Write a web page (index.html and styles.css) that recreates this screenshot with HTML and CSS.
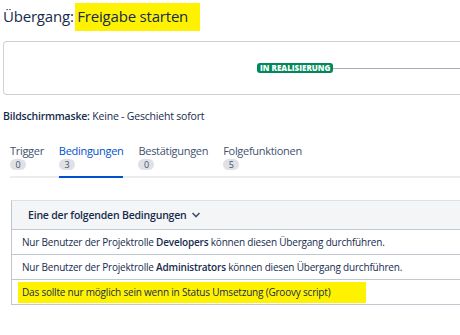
FILE: index.html
```html
<!DOCTYPE html>
<html lang="de">

<head>
  <meta charset="UTF-8">
  <title>Übergang: Freigabe starten</title>
  <link rel="stylesheet" href="styles.css">
</head>

<body>

  <h1 class="title">Übergang: <span class="marker">Freigabe starten</span></h1>

  <div class="diagram">
    <span class="lozenge">IN REALISIERUNG</span>
    <span class="connector"></span>
  </div>

  <p class="screen"><b>Bildschirmmaske:</b> Keine - Geschieht sofort</p>

  <ul class="tabs">
    <li class="tab">Trigger<span class="count">0</span></li>
    <li class="tab active">Bedingungen<span class="count">3</span></li>
    <li class="tab">Bestätigungen<span class="count">0</span></li>
    <li class="tab">Folgefunktionen<span class="count">5</span></li>
  </ul>

  <div class="conditions">
    <div class="cond-head">Eine der folgenden Bedingungen
      <svg class="chevron" width="10" height="8" viewBox="0 0 10 8">
        <path d="M1.5 2 L5 5.5 L8.5 2" fill="none" stroke="#42526e" stroke-width="1.6" />
      </svg>
    </div>
    <div class="cond-row">Nur Benutzer der Projektrolle <b>Developers</b> können diesen Übergang durchführen.</div>
    <div class="cond-row">Nur Benutzer der Projektrolle <b>Administrators</b> können diesen Übergang durchführen.</div>
    <div class="cond-row"><span class="marker small">Das sollte nur möglich sein wenn in Status Umsetzung (Groovy script)</span></div>
  </div>

</body>

</html>
```

FILE: styles.css
```css
html {
  overflow: hidden;
}

body {
  font-family: "Open Sans", "Noto Sans", sans-serif;
  background-color: #ffffff;
  margin: 0;
  padding: 0 0 0 3px;
  color: #172b4d;
}

.title {
  font-size: 15px;
  font-weight: normal;
  margin: 0;
  padding-top: 6px;
  height: 35px;
  letter-spacing: -0.2px;
}

.marker {
  background-color: #fff200;
  padding: 3px 12px 5px 2px;
  margin-left: -2px;
}

.marker.small {
  padding: 3px 36px 4px 4px;
  margin-left: -4px;
}

.diagram {
  height: 52px;
  border: 1px solid #d0d0d0;
  border-right: none;
  border-radius: 4px 0 0 4px;
  display: flex;
  align-items: center;
  padding-left: 253px;
}

.lozenge {
  background-color: #00875a;
  color: #ffffff;
  font-size: 8px;
  font-weight: 800;
  border-radius: 3px;
  padding: 0 3px;
  line-height: 10px;
}

.connector {
  flex: 1;
  height: 1px;
  background-color: #a5adba;
}

.screen {
  font-size: 10.5px;
  margin: 14px 0 0 0;
  letter-spacing: -0.2px;
}

.screen b {
  font-weight: 600;
}

.tabs {
  list-style: none;
  margin: 20px 0 0 7px;
  padding: 0;
  display: flex;
  gap: 15px;
  border-bottom: 2px solid #ebecf0;
}

.tab {
  font-size: 11px;
  color: #42526e;
  display: flex;
  flex-direction: column;
  align-items: flex-start;
  padding-bottom: 6px;
  margin-bottom: -2px;
  letter-spacing: -0.3px;
}

.tab.active {
  color: #0052cc;
  border-bottom: 2px solid #0052cc;
}

.count {
  background-color: #dfe1e6;
  color: #42526e;
  font-size: 9px;
  border-radius: 6px;
  min-width: 16px;
  text-align: center;
  box-sizing: border-box;
  padding: 0 4px;
  line-height: 11px;
  margin-top: 1px;
}

.conditions {
  margin: 22px 0 0 8px;
  border-left: 1px solid #c1c7d0;
  border-top: 1px solid #dfe1e6;
}

.cond-head {
  background-color: #f4f5f7;
  font-size: 10.5px;
  font-weight: 600;
  padding: 0 0 0 16px;
  height: 28px;
  display: flex;
  align-items: center;
  gap: 4px;
  border-bottom: 1px solid #c1c7d0;
  letter-spacing: -0.2px;
}

.cond-row {
  font-size: 10px;
  padding: 0 0 0 10px;
  line-height: 24px;
  border-bottom: 1px solid #c1c7d0;
  letter-spacing: -0.2px;
  white-space: nowrap;
}

.cond-row b {
  font-weight: 600;
}
```
